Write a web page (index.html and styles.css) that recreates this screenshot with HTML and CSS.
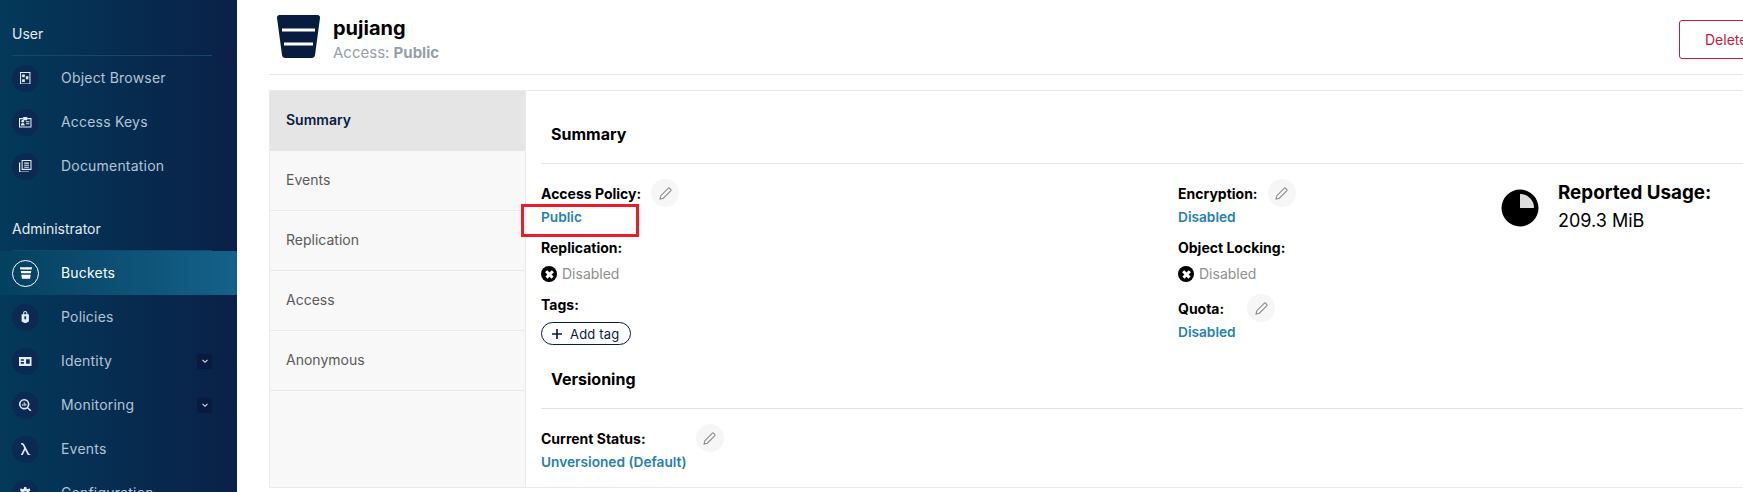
FILE: index.html
```html
<!DOCTYPE html>
<html lang="en">
<head>
    <meta charset="UTF-8">
    <meta name="viewport" content="width=device-width, initial-scale=1.0">
    <title>Bucket pujiang</title>
    <link rel="stylesheet" href="styles.css">
</head>
<body>
<div class="page">
    <!-- Sidebar Menu -->
    <nav class="sidebar">
        <div class="nav-title">User</div>
        <a class="nav-row">
            <span class="nav-icon"><svg viewBox="0 0 12 12"><path fill-rule="evenodd" d="M1 0h10v12H1zM2 1v10h8V1z"/><rect x="3" y="2.4" width="2.6" height="2.6"/><rect x="6.6" y="4" width="2.4" height="3"/><rect x="3" y="7" width="2.6" height="2.6"/></svg></span>
            <span class="nav-label">Object Browser</span>
        </a>
        <a class="nav-row">
            <span class="nav-icon"><svg viewBox="0 0 12 12"><path fill-rule="evenodd" d="M0 2h4v1H1v7h10V3H8V2h4v9H0z"/><circle cx="3.6" cy="5" r="1.3"/><path d="M1.8 9c0-3 3.6-3 3.6 0zM4 1h4v3H4zM6.600 5H10v1H6.600zM6.600 7H10v1H6.600z"/></svg></span>
            <span class="nav-label">Access Keys</span>
        </a>
        <a class="nav-row">
            <span class="nav-icon"><svg viewBox="0 0 12 12"><path fill-rule="evenodd" d="M2.500 0H12v9.500H2.500zM3.500 1v7.500H11V1z"/><path d="M0 2.500h1.200V11H9.500v1H0zM5 2.500h4.500v1H5zM5 4.500h4.500v1H5zM5 6.500h4.500v1H5z"/></svg></span>
            <span class="nav-label">Documentation</span>
        </a>

        <div class="nav-title nav-title-next">Administrator</div>
        <a class="nav-row active">
            <span class="nav-icon"><svg viewBox="0 0 12 12"><path d="M.8 1h10.400l-.4 2H1.200zM1.500 4.200h9l-.3 2H1.800zM2 7.400h8l-.5 3.600h-7z"/></svg></span>
            <span class="nav-label">Buckets</span>
        </a>
        <a class="nav-row">
            <span class="nav-icon"><svg viewBox="0 0 12 12"><path fill-rule="evenodd" d="M4 3V2a2 2 0 0 1 4 0v1h1.500v7L6 12l-3.500-2V3zM5 3h2V2a1 1 0 0 0-2 0zM5.200 5v3h1.600V5z"/></svg></span>
            <span class="nav-label">Policies</span>
        </a>
        <a class="nav-row">
            <span class="nav-icon"><svg viewBox="0 0 12 12"><path fill-rule="evenodd" d="M0 2h12v8.500H0zM1.700 4v1.500h3V4zM1.700 6.800v1.500h3V6.800zM6.800 4v4.300h3.500V4z"/></svg></span>
            <span class="nav-label">Identity</span>
            <span class="nav-toggle"><svg viewBox="0 0 10 10"><path d="M2.500 3.800L5 6.300l2.500-2.500" fill="none" stroke="#dfe6ee" stroke-width="1.100"/></svg></span>
        </a>
        <a class="nav-row">
            <span class="nav-icon"><svg viewBox="0 0 12 12"><path fill-rule="evenodd" d="M5 0a5 5 0 0 1 3.900 8.100L12 11l-1 1-3-3A5 5 0 1 1 5 0zM5 1.500a3.500 3.500 0 1 0 0 7 3.500 3.500 0 0 0 0-7z"/><path d="M3 6.500V5h1v1.500zM4.500 6.500V3h1v3.500zM6 6.500V4.500h1v2z"/></svg></span>
            <span class="nav-label">Monitoring</span>
            <span class="nav-toggle"><svg viewBox="0 0 10 10"><path d="M2.500 3.800L5 6.300l2.500-2.500" fill="none" stroke="#dfe6ee" stroke-width="1.100"/></svg></span>
        </a>
        <a class="nav-row">
            <span class="nav-icon"><svg viewBox="0 0 12 12"><path d="M1.500 12L5 5 3.800 2.500C3.500 1.800 3 1.500 2 1.500V0c1.800 0 2.700.6 3.300 1.800L9.600 10.200c.3.500.7.600 1.400.5V12c-1.500.3-2.400-.2-3-1.300L5.900 6.800 3.300 12z"/></svg></span>
            <span class="nav-label">Events</span>
        </a>
        <a class="nav-row">
            <span class="nav-icon"><svg viewBox="0 0 12 12"><path fill-rule="evenodd" d="M5 0h2l.3 1.700 1.200.5L10 1.300 11 3l-1.300 1.100.1 1.200L12 6l-.4 2-1.700.1-.6 1.100.8 1.500-1.700 1-1.200-1.200H5l-1.200 1.200-1.700-1 .8-1.500-.6-1.100L.6 8 .2 6l1.700-.7.1-1.200L.8 3l1-1.700 1.500.9 1.200-.5zM6 4a2 2 0 1 0 0 4 2 2 0 0 0 0-4z"/></svg></span>
            <span class="nav-label">Configuration</span>
        </a>
    </nav>

    <main class="main">
        <div class="content">
            <header class="bucket-header">
                <svg class="bucket-logo" viewBox="0 0 43 43">
                    <path d="M2.500 0h38a2.500 2.500 0 0 1 2.500 3L38 40a3.500 3.500 0 0 1-3.500 3h-26A3.500 3.500 0 0 1 5 40L0 3a2.500 2.500 0 0 1 2.500-3z" fill="#081c42"/>
                    <path d="M5 15h33M7 29h29" stroke="#fff" stroke-width="3"/>
                </svg>
                <div class="bucket-name">
                    <h1>pujiang</h1>
                    <p>Access: <b>Public</b></p>
                </div>
                <button class="delete-button">Delete Bucket</button>
            </header>

            <div class="panel">
                <div class="tabs">
                    <div class="tab selected">Summary</div>
                    <div class="tab">Events</div>
                    <div class="tab">Replication</div>
                    <div class="tab">Access</div>
                    <div class="tab">Anonymous</div>
                </div>

                <div class="details">
                    <h3 class="section-head">Summary</h3>
                    <div class="summary-grid">
                        <div class="field-col">
                            <div class="field-label">Access Policy:
                                <span class="pencil"><svg viewBox="0 0 12 12"><path d="M1 11l.7-3L8.500 1.200a1 1 0 0 1 1.400 0l.9.9a1 1 0 0 1 0 1.400L4 10.300z" fill="none" stroke="#8a8a8a"/></svg></span>
                            </div>
                            <div class="field-value link annotated">Public<span class="red-box"></span></div>
                            <div class="field-label spaced">Replication:</div>
                            <div class="field-value off"><span class="x-icon"></span><span class="off-text">Disabled</span></div>
                            <div class="field-label spaced">Tags:</div>
                            <button class="add-tag">
                                <svg viewBox="0 0 12 12"><path d="M6 0v12M0 6h12" stroke="#081c42" stroke-width="2"/></svg>
                                Add tag
                            </button>
                        </div>

                        <div class="field-col">
                            <div class="field-label">Encryption:
                                <span class="pencil"><svg viewBox="0 0 12 12"><path d="M1 11l.7-3L8.500 1.200a1 1 0 0 1 1.400 0l.9.9a1 1 0 0 1 0 1.400L4 10.300z" fill="none" stroke="#8a8a8a"/></svg></span>
                            </div>
                            <div class="field-value link">Disabled</div>
                            <div class="field-label spaced">Object Locking:</div>
                            <div class="field-value off"><span class="x-icon"></span><span class="off-text">Disabled</span></div>
                            <div class="field-label spaced quota">Quota:
                                <span class="pencil"><svg viewBox="0 0 12 12"><path d="M1 11l.7-3L8.500 1.200a1 1 0 0 1 1.400 0l.9.9a1 1 0 0 1 0 1.400L4 10.300z" fill="none" stroke="#8a8a8a"/></svg></span>
                            </div>
                            <div class="field-value link">Disabled</div>
                        </div>

                        <div class="usage">
                            <svg class="usage-pie" viewBox="-19 -19 38 38">
                                <circle r="18.500" fill="#000"/>
                                <path d="M0 0V-14A14 14 0 0 1 14 0Z" fill="#dcdcdc"/>
                            </svg>
                            <div>
                                <div class="usage-label">Reported Usage:</div>
                                <div class="usage-value">209.3 MiB</div>
                            </div>
                        </div>
                    </div>

                    <h3 class="section-head versioning">Versioning</h3>
                    <div class="status-block">
                        <div class="field-label">Current Status:
                            <span class="pencil status"><svg viewBox="0 0 12 12"><path d="M1 11l.7-3L8.500 1.200a1 1 0 0 1 1.400 0l.9.9a1 1 0 0 1 0 1.400L4 10.300z" fill="none" stroke="#8a8a8a"/></svg></span>
                        </div>
                        <div class="field-value link">Unversioned (Default)</div>
                    </div>
                </div>
            </div>
        </div>
    </main>
</div>
</body>
</html>
```

FILE: styles.css
```css
* {
    margin: 0;
    padding: 0;
    box-sizing: border-box;
}

html, body {
    height: 100%;
    overflow: hidden;
}

body {
    font-family: 'Inter', 'Liberation Sans', sans-serif;
    background-color: #fff;
    color: #000;
}

.page {
    display: flex;
    height: 492px;
}

/* Sidebar */
.sidebar {
    flex: 0 0 237px;
    height: 492px;
    overflow: hidden;
    padding-top: 25px;
    background: linear-gradient(90deg, #03395a 0%, #0a2047 100%);
}

.nav-title {
    margin: 0 25px 0 12px;
    height: 31px;
    line-height: 18px;
    font-size: 14px;
    color: #e4ebf1;
    border-bottom: 1px solid #17456b;
}

.nav-title-next {
    margin-top: 32px;
}

.nav-row {
    display: flex;
    align-items: center;
    height: 44px;
    padding: 0 25px 0 12px;
    font-size: 14px;
    letter-spacing: 0.2px;
    color: #b3c4d6;
}

.nav-label {
    margin-bottom: 2px;
}

.nav-icon {
    display: flex;
    align-items: center;
    justify-content: center;
    flex: 0 0 27px;
    width: 27px;
    height: 27px;
    margin-right: 22px;
    border-radius: 50%;
    background-color: #0a2a53;
}

.nav-icon svg {
    width: 12.5px;
    height: 12.5px;
    fill: #e6ecf2;
}

.nav-toggle {
    display: flex;
    align-items: center;
    justify-content: center;
    width: 15px;
    height: 15px;
    margin-left: auto;
    border-radius: 2px;
    background-color: #081a3f;
}

.nav-toggle svg {
    width: 10px;
    height: 10px;
}

.nav-row.active {
    color: #fff;
    background: linear-gradient(90deg, #04405f 0%, #15618a 100%);
}

.active .nav-icon {
    background-color: transparent;
    border: 1.5px solid #fff;
}

.active .nav-icon svg {
    width: 14px;
    height: 14px;
    fill: #fff;
}

/* Main area */
.main {
    flex: 1;
    min-width: 0;
    overflow: hidden;
    padding-left: 32px;
}

.content {
    width: 1550px;
}

.bucket-header {
    display: flex;
    align-items: flex-start;
    height: 75px;
    padding: 15px 0 0 8px;
    border-bottom: 1px solid #e5e5e5;
}

.bucket-logo {
    width: 43px;
    height: 43px;
    margin-right: 13px;
}

.bucket-name h1 {
    font-size: 20px;
    line-height: 26px;
    font-weight: 700;
}

.bucket-name p {
    margin-top: 1px;
    font-size: 15px;
    line-height: 22px;
    color: #969fa9;
}

.bucket-name p b {
    font-weight: 700;
}

.delete-button {
    margin: 5px 0 0 auto;
    width: 140px;
    height: 39px;
    padding-left: 25px;
    text-align: left;
    font-family: inherit;
    font-size: 14px;
    color: #c51b3f;
    background: #fff;
    border: 1px solid #c51b3f;
    border-radius: 3px;
}

.panel {
    display: flex;
    height: 398px;
    margin-top: 15px;
    border-top: 1px solid #eaeaea;
    border-bottom: 1px solid #eaeaea;
}

.tabs {
    flex: 0 0 257px;
    background-color: #f8f8f8;
    border-left: 1px solid #eaeaea;
    border-right: 1px solid #eaeaea;
}

.tab {
    height: 60px;
    line-height: 57px;
    padding-left: 16px;
    font-size: 14px;
    color: #5a5a5a;
    border-bottom: 1px solid #eaeaea;
}

.tab.selected {
    font-weight: 600;
    color: #081c42;
    background-color: #e5e5e5;
    border-bottom: none;
}

.details {
    flex: 1;
    padding: 32px 0 0 15px;
}

.section-head {
    height: 41px;
    padding-left: 10px;
    font-size: 16px;
    line-height: 22px;
    font-weight: 700;
    border-bottom: 1px solid #e2e2e2;
}

.summary-grid {
    display: grid;
    grid-template-columns: 637px 323px 1fr;
    margin-top: 19px;
}

.field-label {
    display: flex;
    align-items: center;
    height: 22px;
    margin-top: -1px;
    font-size: 14px;
    font-weight: 700;
}

.field-label.spaced {
    margin-top: 8px;
}

.field-label.quota {
    margin-top: 12px;
}

.pencil {
    display: flex;
    align-items: center;
    justify-content: center;
    width: 28px;
    height: 28px;
    margin-left: 10px;
    border-radius: 50%;
    background-color: #f6f6f6;
}

.quota .pencil {
    margin-left: 23px;
}

.pencil.status {
    margin-left: 50px;
}

.pencil svg {
    width: 13px;
    height: 13px;
}

.field-value {
    display: flex;
    align-items: center;
    height: 22px;
    margin-top: 2px;
    font-size: 13.7px;
}

.field-value.link {
    font-weight: 600;
    color: #2781b0;
}

.field-value.off {
    margin-top: 5px;
    font-size: 14px;
    color: #8f8f8f;
}

.off-text {
    margin-bottom: 2px;
}

.x-icon {
    position: relative;
    flex: 0 0 16px;
    height: 16px;
    margin-right: 5px;
    border-radius: 50%;
    background-color: #000;
}

.x-icon::before,
.x-icon::after {
    content: "";
    position: absolute;
    left: 3.5px;
    top: 6.75px;
    width: 9px;
    height: 2.500px;
    background-color: #fff;
    transform: rotate(45deg);
}

.x-icon::after {
    transform: rotate(-45deg);
}

/* The red marker drawn over the screenshot */
.annotated {
    position: relative;
}

.red-box {
    position: absolute;
    left: -20px;
    top: -2px;
    width: 118px;
    height: 33px;
    border: 3px solid #ee1c2a;
}

.add-tag {
    display: flex;
    align-items: center;
    width: 90px;
    height: 23px;
    margin-top: 7px;
    padding-left: 10px;
    font-family: inherit;
    font-size: 13px;
    letter-spacing: 0.2px;
    color: #081c42;
    background: #fff;
    border: 1px solid #081c42;
    border-radius: 12px;
}

.add-tag svg {
    width: 10px;
    height: 10px;
    margin-right: 8px;
}

.usage {
    display: flex;
    align-items: flex-start;
    padding-top: 6px;
}

.usage-pie {
    width: 38px;
    height: 38px;
    margin-right: 19px;
}

.usage-label {
    margin-top: -10px;
    font-size: 18.8px;
    line-height: 28px;
    font-weight: 700;
}

.usage-value {
    font-size: 18px;
    line-height: 28px;
}

.versioning {
    margin-top: 23px;
}

.status-block {
    margin-top: 19px;
}
```
